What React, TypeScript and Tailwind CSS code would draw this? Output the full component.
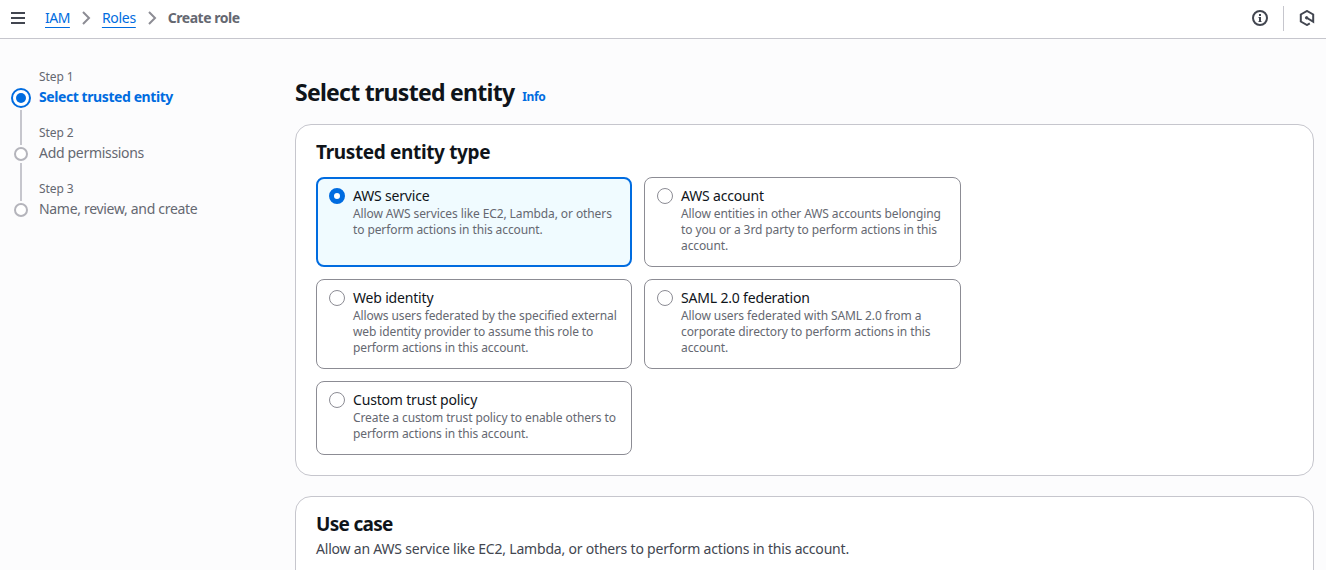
import React from "react";

type Entity = { title: string; lines: string[]; selected?: boolean; height: string };

const entities: Entity[] = [
  { title: "AWS service", lines: ["Allow AWS services like EC2, Lambda, or others", "to perform actions in this account."], selected: true, height: "h-[90px]" },
  { title: "AWS account", lines: ["Allow entities in other AWS accounts belonging", "to you or a 3rd party to perform actions in this", "account."], height: "h-[90px]" },
  { title: "Web identity", lines: ["Allows users federated by the specified external", "web identity provider to assume this role to", "perform actions in this account."], height: "h-[90px]" },
  { title: "SAML 2.0 federation", lines: ["Allow users federated with SAML 2.0 from a", "corporate directory to perform actions in this", "account."], height: "h-[90px]" },
  { title: "Custom trust policy", lines: ["Create a custom trust policy to enable others to", "perform actions in this account."], height: "h-[74px]" },
];

const steps = [
  { label: "Step 1", title: "Select trusted entity", active: true },
  { label: "Step 2", title: "Add permissions", active: false },
  { label: "Step 3", title: "Name, review, and create", active: false },
];

function Chevron() {
  return (
    <svg width="16" height="16" viewBox="0 0 16 16" fill="none" stroke="#8c8c94" strokeWidth="2" className="shrink-0">
      <path d="m5 2 6 6-6 6" />
    </svg>
  );
}

function Tile({ item }: { item: Entity }) {
  return (
    <div
      className={`flex rounded-lg ${item.height} ${
        item.selected ? "border-2 border-[#006ce0] bg-[#f0fbff] pl-[11px] pt-[8px]" : "border border-[#8c8c94] bg-white pl-[12px] pt-[9px]"
      }`}
    >
      {item.selected ? (
        <span className="mt-px size-4 shrink-0 rounded-full border-[5px] border-[#006ce0] bg-white" />
      ) : (
        <span className="mt-px size-4 shrink-0 rounded-full border border-[#8c8c94] bg-white" />
      )}
      <div className="ml-2 whitespace-nowrap">
        <div className="text-[14px] leading-[18px] tracking-[-0.18px] text-[#0f141a]">{item.title}</div>
        <div className="mt-px text-[12px] leading-4 tracking-[-0.1px] text-[#656871]">
          {item.lines.map((l) => (
            <div key={l}>{l}</div>
          ))}
        </div>
      </div>
    </div>
  );
}

function Steps() {
  return (
    <ol className="w-[295px] shrink-0 pl-[11px] pt-[28px]">
      {steps.map((s, i) => (
        <li key={s.label} className="flex h-14">
          <div className="flex w-5 flex-col items-center">
            {s.active ? (
              <span className="mt-[21px] flex size-5 shrink-0 items-center justify-center rounded-full border-2 border-[#006ce0] bg-white">
                <span className="size-[10px] rounded-full bg-[#006ce0]" />
              </span>
            ) : (
              <span className="mt-6 size-[14px] shrink-0 rounded-full border-2 border-[#b4b4bb] bg-white" />
            )}
            {i < 2 && <span className="mt-[2px] -mb-[22px] w-[2px] flex-1 bg-[#c6c6cd]" />}
          </div>
          <div className="ml-2 whitespace-nowrap text-[#656871]">
            <div className="text-[12px] leading-5 tracking-[-0.1px]">{s.label}</div>
            <div className={s.active ? "font-bold leading-5 tracking-[-0.42px] text-[#006ce0]" : "leading-5 tracking-[-0.31px]"}>{s.title}</div>
          </div>
        </li>
      ))}
    </ol>
  );
}

export default function App() {
  return (
    <div className="flex h-[570px] flex-col overflow-hidden bg-[#fcfcfd] font-['Noto_Sans',sans-serif] text-[14px] text-[#0f141a]">
      <header className="flex h-[39px] shrink-0 items-center border-b border-[#c6c6cd] bg-white pb-[2px] pl-[10px] pr-[11px]">
        <svg width="16" height="16" viewBox="0 0 16 16" fill="none" stroke="#424650" strokeWidth="2">
          <path d="M1 3h14M1 8h14M1 13h14" />
        </svg>
        <nav className="ml-[19px] flex items-center gap-2 leading-5">
          <a className="tracking-[-0.5px] text-[#006ce0] underline underline-offset-4">IAM</a>
          <Chevron />
          <a className="tracking-[-0.3px] text-[#006ce0] underline underline-offset-4">Roles</a>
          <Chevron />
          <span className="font-bold tracking-[-0.48px] text-[#656871]">Create role</span>
        </nav>
        <div className="ml-auto flex items-center">
          <svg width="16" height="16" viewBox="0 0 16 16" fill="none" stroke="#424650" strokeWidth="2">
            <circle cx="8" cy="8" r="7" />
            <path d="M8 4v2M8 7v5" />
            <path d="M6.5 7.5H8M6.5 11.5h3" strokeWidth="1" />
          </svg>
          <span className="ml-[15px] mr-[15px] h-[25px] w-px bg-[#c6c6cd]" />
          <svg width="16" height="16" viewBox="0 0 16 16" fill="none" stroke="#424650" strokeWidth="2">
            <path d="M10.8 13.4 8 15 1.8 11.5v-7L8 1l6.2 3.5v7.2L8 8" />
            <circle cx="7.6" cy="7.8" r="1.2" fill="#424650" strokeWidth="1" />
          </svg>
        </div>
      </header>
      <div className="flex min-h-0 flex-1">
        <Steps />
        <main className="mr-3 flex-1">
          <div className="flex h-[85px] items-baseline whitespace-nowrap pt-[38px]">
            <h1 className="text-[23px] font-bold leading-[31px] tracking-[-0.72px]">Select trusted entity</h1>
            <a className="ml-2 text-[12px] font-bold leading-5 tracking-[-0.4px] text-[#006ce0]">Info</a>
          </div>
          <section className="h-[352px] rounded-2xl border border-[#c6c6cd] bg-white px-5 pt-[15px]">
            <h2 className="text-[19px] font-bold leading-6 tracking-[-0.36px]">Trusted entity type</h2>
            <div className="mt-[13px] grid w-[645px] grid-cols-[316px_317px] gap-3">
              {entities.map((e) => (
                <Tile key={e.title} item={e} />
              ))}
            </div>
          </section>
          <section className="mt-5 h-[120px] rounded-2xl border border-[#c6c6cd] bg-white px-5 pt-[15px]">
            <h2 className="text-[19px] font-bold leading-6 tracking-[-0.7px]">Use case</h2>
            <p className="mt-[3px] whitespace-nowrap leading-5 tracking-[-0.2px] text-[#424650]">
              Allow an AWS service like EC2, Lambda, or others to perform actions in this account.
            </p>
          </section>
        </main>
      </div>
    </div>
  );
}
